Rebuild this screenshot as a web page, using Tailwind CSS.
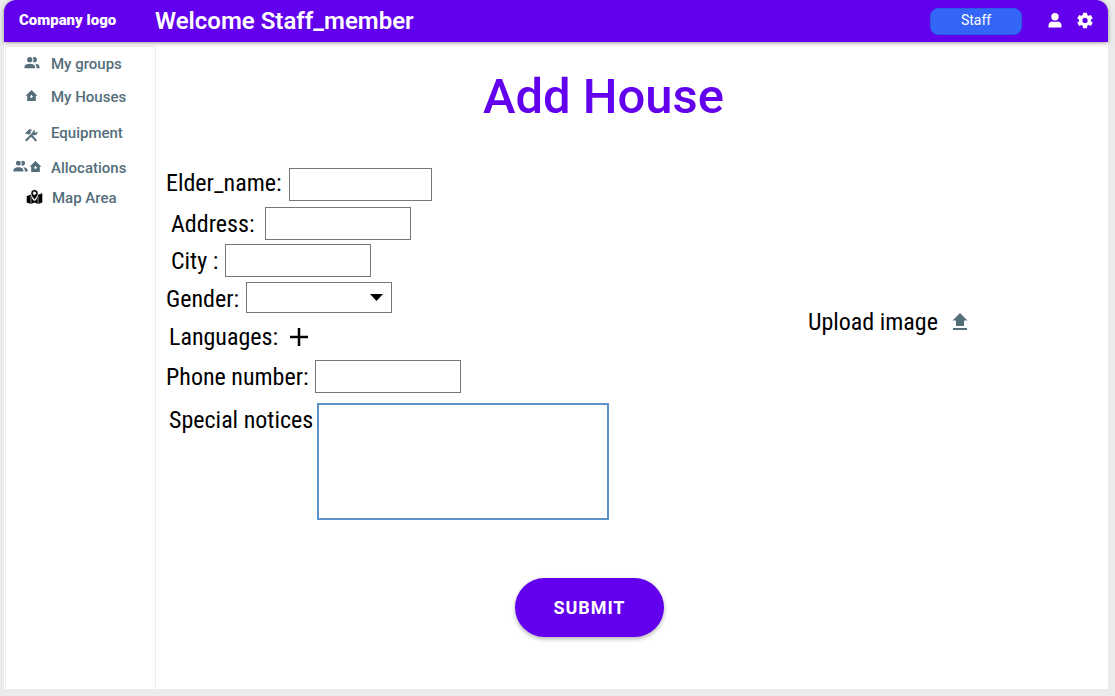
<!DOCTYPE html>
<html lang="en">
<head>
<meta charset="utf-8">
<meta name="viewport" content="width=device-width, initial-scale=1">
<title>Add House</title>
<script src="https://cdn.jsdelivr.net/npm/@tailwindcss/browser@4"></script>
</head>
<body class="flex min-h-screen flex-col bg-[#ebebeb] pr-[7px] pb-[7px] pl-1 font-['Roboto',sans-serif]">
<svg class="hidden" aria-hidden="true">
  <symbol id="people" viewBox="0 0 24 24"><path d="M16 17v2H2v-2s0-4 7-4 7 4 7 4m-3.500-9.500A3.500 3.500 0 1 0 9 11a3.500 3.500 0 0 0 3.500-3.500m3.440 5.500A5.320 5.320 0 0 1 18 17v2h4v-2s0-3.630-6.060-4M15 4a3.390 3.390 0 0 0-1.930.59 5 5 0 0 1 0 5.820A3.390 3.390 0 0 0 15 11a3.500 3.500 0 0 0 0-7"/></symbol>
  <symbol id="house" viewBox="0 0 24 24"><path fill-rule="evenodd" d="M12 2 1 12.500h3V22h16v-9.500h3zM11 11h2v2.500h2.500L12 17l-3.500-3.500H11z"/></symbol>
</svg>
<div class="flex grow flex-col rounded-t-xl bg-white">
  <header class="z-10 flex h-[42px] items-center rounded-t-xl bg-[#6200ee] pr-[13px] pl-[15px] text-white shadow-[0_1px_4px_rgba(0,0,0,0.4)]">
    <a href="#" class="w-[136px] pb-[2px] text-[15px] font-black">Company logo</a>
    <p class="text-2xl font-semibold">Welcome Staff_member</p>
    <button class="ml-auto h-[27px] w-[92px] rounded-lg border border-[#2b5be0] bg-[#3366f6] pb-[2px] text-sm">Staff</button>
    <button class="ml-[23px] p-px" aria-label="Profile"><svg class="size-[18px]" viewBox="0 0 18 18" fill="currentColor"><circle cx="9" cy="4.800" r="3.700"/><path d="M2.500 15.500v-2.200c0-2.500 2-3.800 4-3.800.8.500 4.200.5 5 0 2 0 4 1.300 4 3.800v2.200z"/></svg></button>
    <button class="ml-2.5 p-px" aria-label="Settings"><svg class="size-[18px]" viewBox="0 0 24 24" fill="currentColor"><path fill-rule="evenodd" d="M9.500 1h5l.6 3.100 1.700 1 3-1.100 2.500 4.300-2.400 2v1.900l2.400 2-2.500 4.300-3-1.100-1.700 1-.6 3.100h-5l-.6-3.100-1.700-1-3 1.100-2.500-4.300 2.400-2v-1.900l-2.400-2L4.200 4l3 1.100 1.700-1zM12 7.700a3.500 3.500 0 1 0 0 7 3.500 3.500 0 0 0 0-7z"/></svg></button>
  </header>
  <div class="flex grow">
    <nav class="mt-1 ml-px w-[151px] shrink-0 border border-b-0 border-[#ededed] pt-px text-[15px] font-medium text-[#546e7a]">
      <a href="#" class="flex h-[33px] items-center"><span class="flex w-[45px] justify-center pl-[6px] pb-[4px]"><svg class="size-[18px]" fill="currentColor"><use href="#people"/></svg></span>My groups</a>
      <a href="#" class="flex h-[33px] items-center"><span class="flex w-[45px] justify-center pl-[6px] pb-[4px]"><svg class="size-[13px]" fill="currentColor"><use href="#house"/></svg></span>My Houses</a>
      <a href="#" class="flex h-[38px] items-center"><span class="flex w-[45px] justify-center pl-[5px] pt-[3px]"><svg class="size-[14px]" viewBox="0 0 24 24" fill="none" stroke="currentColor"><path stroke-width="3.500" d="M3 22 15 10M12 12l9 10"/><path fill="currentColor" stroke="none" d="M2 9l6-6c2-1 4-1 6 1l-3 1 1 3-4 4-3-3-1 2zM15 12c-2-3-1-7 4-9l-1 4 2 1 3-2c1 5-3 8-8 6z"/></svg></span>Equipment</a>
      <a href="#" class="flex h-8 items-center"><span class="flex w-[45px] items-center pl-[6px] pb-[4px]"><svg class="size-[17px]" fill="currentColor"><use href="#people"/></svg><svg class="size-[13px]" fill="currentColor"><use href="#house"/></svg></span>Allocations</a>
      <a href="#" class="flex h-7 items-center"><span class="flex w-[46px] justify-center pl-[10px] pb-[2px] text-black"><svg class="size-[17px]" viewBox="0 0 24 24" fill="currentColor"><path d="M1 10l6-2c1 4 2 7 5 9 3-2 4-5 5-9l6-2v13l-6 2-5-2-5 2-6-2z"/><path fill="none" stroke="#fff" stroke-width=".8" d="M7 10v12M17 10v11"/><path fill-rule="evenodd" stroke="#fff" stroke-width=".7" d="M12 1a5 5 0 0 0-5 5c0 4 5 9 5 9s5-5 5-9a5 5 0 0 0-5-5zm0 3a2 2 0 1 1 0 4 2 2 0 0 1 0-4z"/></svg></span>Map Area</a>
    </nav>
    <main class="grow">
      <h1 class="mt-6 mr-[57px] text-center text-[49px] leading-[62px] font-medium text-[#6200ee]">Add House</h1>
      <form class="pt-[40px] font-['Roboto_Condensed','Roboto',sans-serif] text-2xl leading-[34px] whitespace-nowrap text-black">
        <div class="flex items-center">
          <div class="w-[642px] shrink-0">
            <div class="flex h-[33px]"><label for="elder" class="-mt-0.5 w-[133px] pl-[10px]">Elder_name:</label><input id="elder" class="h-[33px] w-[143px] border border-[#777] bg-white px-2 text-lg"></div>
            <div class="mt-1.5 flex h-[33px]"><label for="address" class="w-[109px] pl-[15px]">Address:</label><input id="address" class="h-[33px] w-[146px] border border-[#777] bg-white px-2 text-lg"></div>
            <div class="mt-1 flex h-[33px]"><label for="city" class="w-[69px] pl-[15px]">City :</label><input id="city" class="h-[33px] w-[146px] border border-[#777] bg-white px-2 text-lg"></div>
            <div class="mt-[5px] flex h-[31px]"><label for="gender" class="w-[90px] pl-[10px]">Gender:</label>
              <div class="relative"><select id="gender" class="block h-[31px] w-[146px] appearance-none border border-[#777] bg-white px-2 text-lg"><option></option></select><svg class="pointer-events-none absolute top-3 right-[9px] h-[7px] w-[13px]" viewBox="0 0 13 7"><path d="M0 0h13L6.500 7z"/></svg></div>
            </div>
            <div class="mt-2 flex h-8 items-center"><span class="w-[133px] pl-[13px]">Languages:</span><button type="button" aria-label="Add language"><svg class="size-5" viewBox="0 0 20 20" stroke="#000" stroke-width="2.500"><path d="M1 10h18M10 1v18"/></svg></button></div>
            <div class="mt-[7px] flex h-[33px]"><label for="phone" class="w-[159px] pl-[10px]">Phone number:</label><input id="phone" type="tel" class="h-[33px] w-[146px] border border-[#777] bg-white px-2 text-lg"></div>
            <div class="mt-2.5 flex"><label for="notices" class="w-[161px] pl-[13px]">Special notices</label><textarea id="notices" class="h-[117px] w-[292px] resize-none border-2 border-[#5d92c9] bg-white p-2 text-lg"></textarea></div>
          </div>
          <div class="-mt-11 pl-[10px]"><button type="button" class="flex items-center gap-3">Upload image<svg class="size-5" viewBox="0 0 20 20" fill="#546e7a"><path d="M10 1 2.500 8.500H6V14h8V8.500h3.500zM3 16h14v2H3z"/></svg></button></div>
        </div>
        <button type="submit" class="mt-[58px] ml-[359px] h-[59px] w-[149px] rounded-full bg-[#6200ee] font-['Roboto',sans-serif] text-lg font-bold tracking-wider text-white shadow-[0_2px_4px_rgba(0,0,0,0.3)]">SUBMIT</button>
      </form>
    </main>
  </div>
</div>
</body>
</html>
